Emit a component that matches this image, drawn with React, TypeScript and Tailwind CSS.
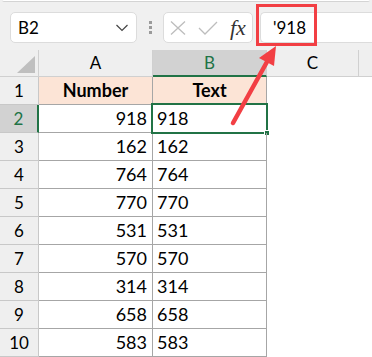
const rows = [
  [918, '918'],
  [162, '162'],
  [764, '764'],
  [770, '770'],
  [531, '531'],
  [570, '570'],
  [314, '314'],
  [658, '658'],
  [583, '583'],
];

export default function App() {
  return (
    <div className="relative w-[372px] h-[357px] overflow-hidden bg-white font-['Lato',sans-serif] text-black">
      {/* formula bar */}
      <div className="h-[50px] bg-[#f0f0f0] flex flex-col">
        <div className="h-[2px] bg-white border-b border-[#d4d4d4] mx-[2px] rounded-b" />
        <div className="flex items-center mt-[10px] h-[31px]">
          <div className="ml-[10px] w-[127px] h-full bg-white border border-[#dcdcdc] rounded-[5px] flex items-center pl-[7px] pr-[7px]">
            <span className="text-[17px] leading-none">B2</span>
            <svg className="ml-auto mr-[1px]" width="12" height="8" viewBox="0 0 12 8">
              <polyline points="0.5,1 6,6.5 11.5,1" fill="none" stroke="#444" strokeWidth="1.2" />
            </svg>
          </div>
          <div className="w-[26px] flex flex-col items-center gap-[2px]">
            <div className="w-[3px] h-[3px] bg-[#9a9a9a]" />
            <div className="w-[3px] h-[3px] bg-[#9a9a9a]" />
            <div className="w-[3px] h-[3px] bg-[#9a9a9a]" />
          </div>
          <div className="w-[90px] h-full bg-white border border-[#dcdcdc] rounded-[5px] flex items-center pl-[6px]">
            <svg width="16" height="14" viewBox="0 0 16 14">
              <path d="M1 0.5 L15 13.5 M15 0.5 L1 13.5" stroke="#bdbdbd" strokeWidth="1.3" fill="none" />
            </svg>
            <svg className="ml-[12px]" width="20" height="14" viewBox="0 0 20 14">
              <polyline points="1,7 7,13 19,1" stroke="#bdbdbd" strokeWidth="1.3" fill="none" />
            </svg>
            <span className="ml-[12px] font-['Liberation_Serif',serif] italic text-[22px] leading-none text-[#333]">fx</span>
          </div>
          <div className="ml-[7px] flex-1 h-full bg-white border border-[#dcdcdc] rounded-l-[5px] border-r-0 flex items-center pl-[12px]">
            <span className="text-[17px] leading-none">'918</span>
          </div>
        </div>
      </div>

      {/* column headers */}
      <div className="flex h-[27px] bg-[#efefef] text-[17px]">
        <div className="relative w-[39px] border-r border-b border-[#d0d0d0]">
          <svg className="absolute left-0 top-0" width="39" height="27">
            <polygon points="17,23 35,23 35,6" fill="#bfbfbf" />
          </svg>
        </div>
        <div className="w-[114px] border-r border-b border-[#d0d0d0] flex items-center justify-center">A</div>
        <div className="w-[114px] bg-[#d2d2d2] border-r border-[#d0d0d0] border-b-2 border-b-[#217346] flex items-center justify-center text-[#217346]">B</div>
        <div className="w-[92px] border-r border-b border-[#d0d0d0] flex items-center justify-center">C</div>
        <div className="flex-1 border-b border-[#d0d0d0]" />
      </div>

      {/* header row */}
      <div className="flex h-[28px] text-[18px]">
        <div className="w-[39px] bg-[#efefef] border-r border-b border-[#c8c8c8] flex items-center justify-center text-[17px]">1</div>
        <div className="w-[114px] bg-[#fce4d6] border-r border-b border-[#a6a6a6] flex items-center justify-center font-bold">Number</div>
        <div className="w-[114px] bg-[#fce4d6] border-r border-b border-[#a6a6a6] flex items-center justify-center font-bold">Text</div>
      </div>

      {rows.map(([n, t], i) => {
        const sel = i === 0;
        return (
          <div key={i} className="flex h-[28px] text-[18px]">
            <div
              className={
                sel
                  ? 'w-[39px] bg-[#d2d2d2] border-r-2 border-r-[#217346] border-b border-[#c8c8c8] flex items-center justify-center text-[17px] text-[#217346]'
                  : 'w-[39px] bg-[#efefef] border-r border-b border-[#c8c8c8] flex items-center justify-center text-[17px]'
              }
            >
              {i + 2}
            </div>
            <div className="w-[114px] border-r border-b border-[#a6a6a6] flex items-center justify-end pr-[5px]">{n}</div>
            <div className="relative w-[114px] border-r border-b border-[#a6a6a6] flex items-center pl-[4px]">
              {t}
              {sel && (
                <>
                  <div className="absolute left-[-2px] top-[-2px] w-[117px] h-[31px] border-2 border-[#217346]" />
                  <div className="absolute left-[111px] top-[25px] w-[6px] h-[6px] bg-[#217346] border border-white" />
                </>
              )}
            </div>
          </div>
        );
      })}

      {/* annotation */}
      <div className="absolute left-[256px] top-[4px] w-[61px] h-[42px] border-[3px] border-[#f23f44]" />
      <svg className="absolute left-0 top-0 pointer-events-none" width="372" height="357">
        <line x1="233" y1="123" x2="268" y2="60" stroke="#f23f44" strokeWidth="4.5" strokeLinecap="round" />
        <polygon points="276,46 259,58 274,66" fill="#f23f44" />
      </svg>
    </div>
  );
}
